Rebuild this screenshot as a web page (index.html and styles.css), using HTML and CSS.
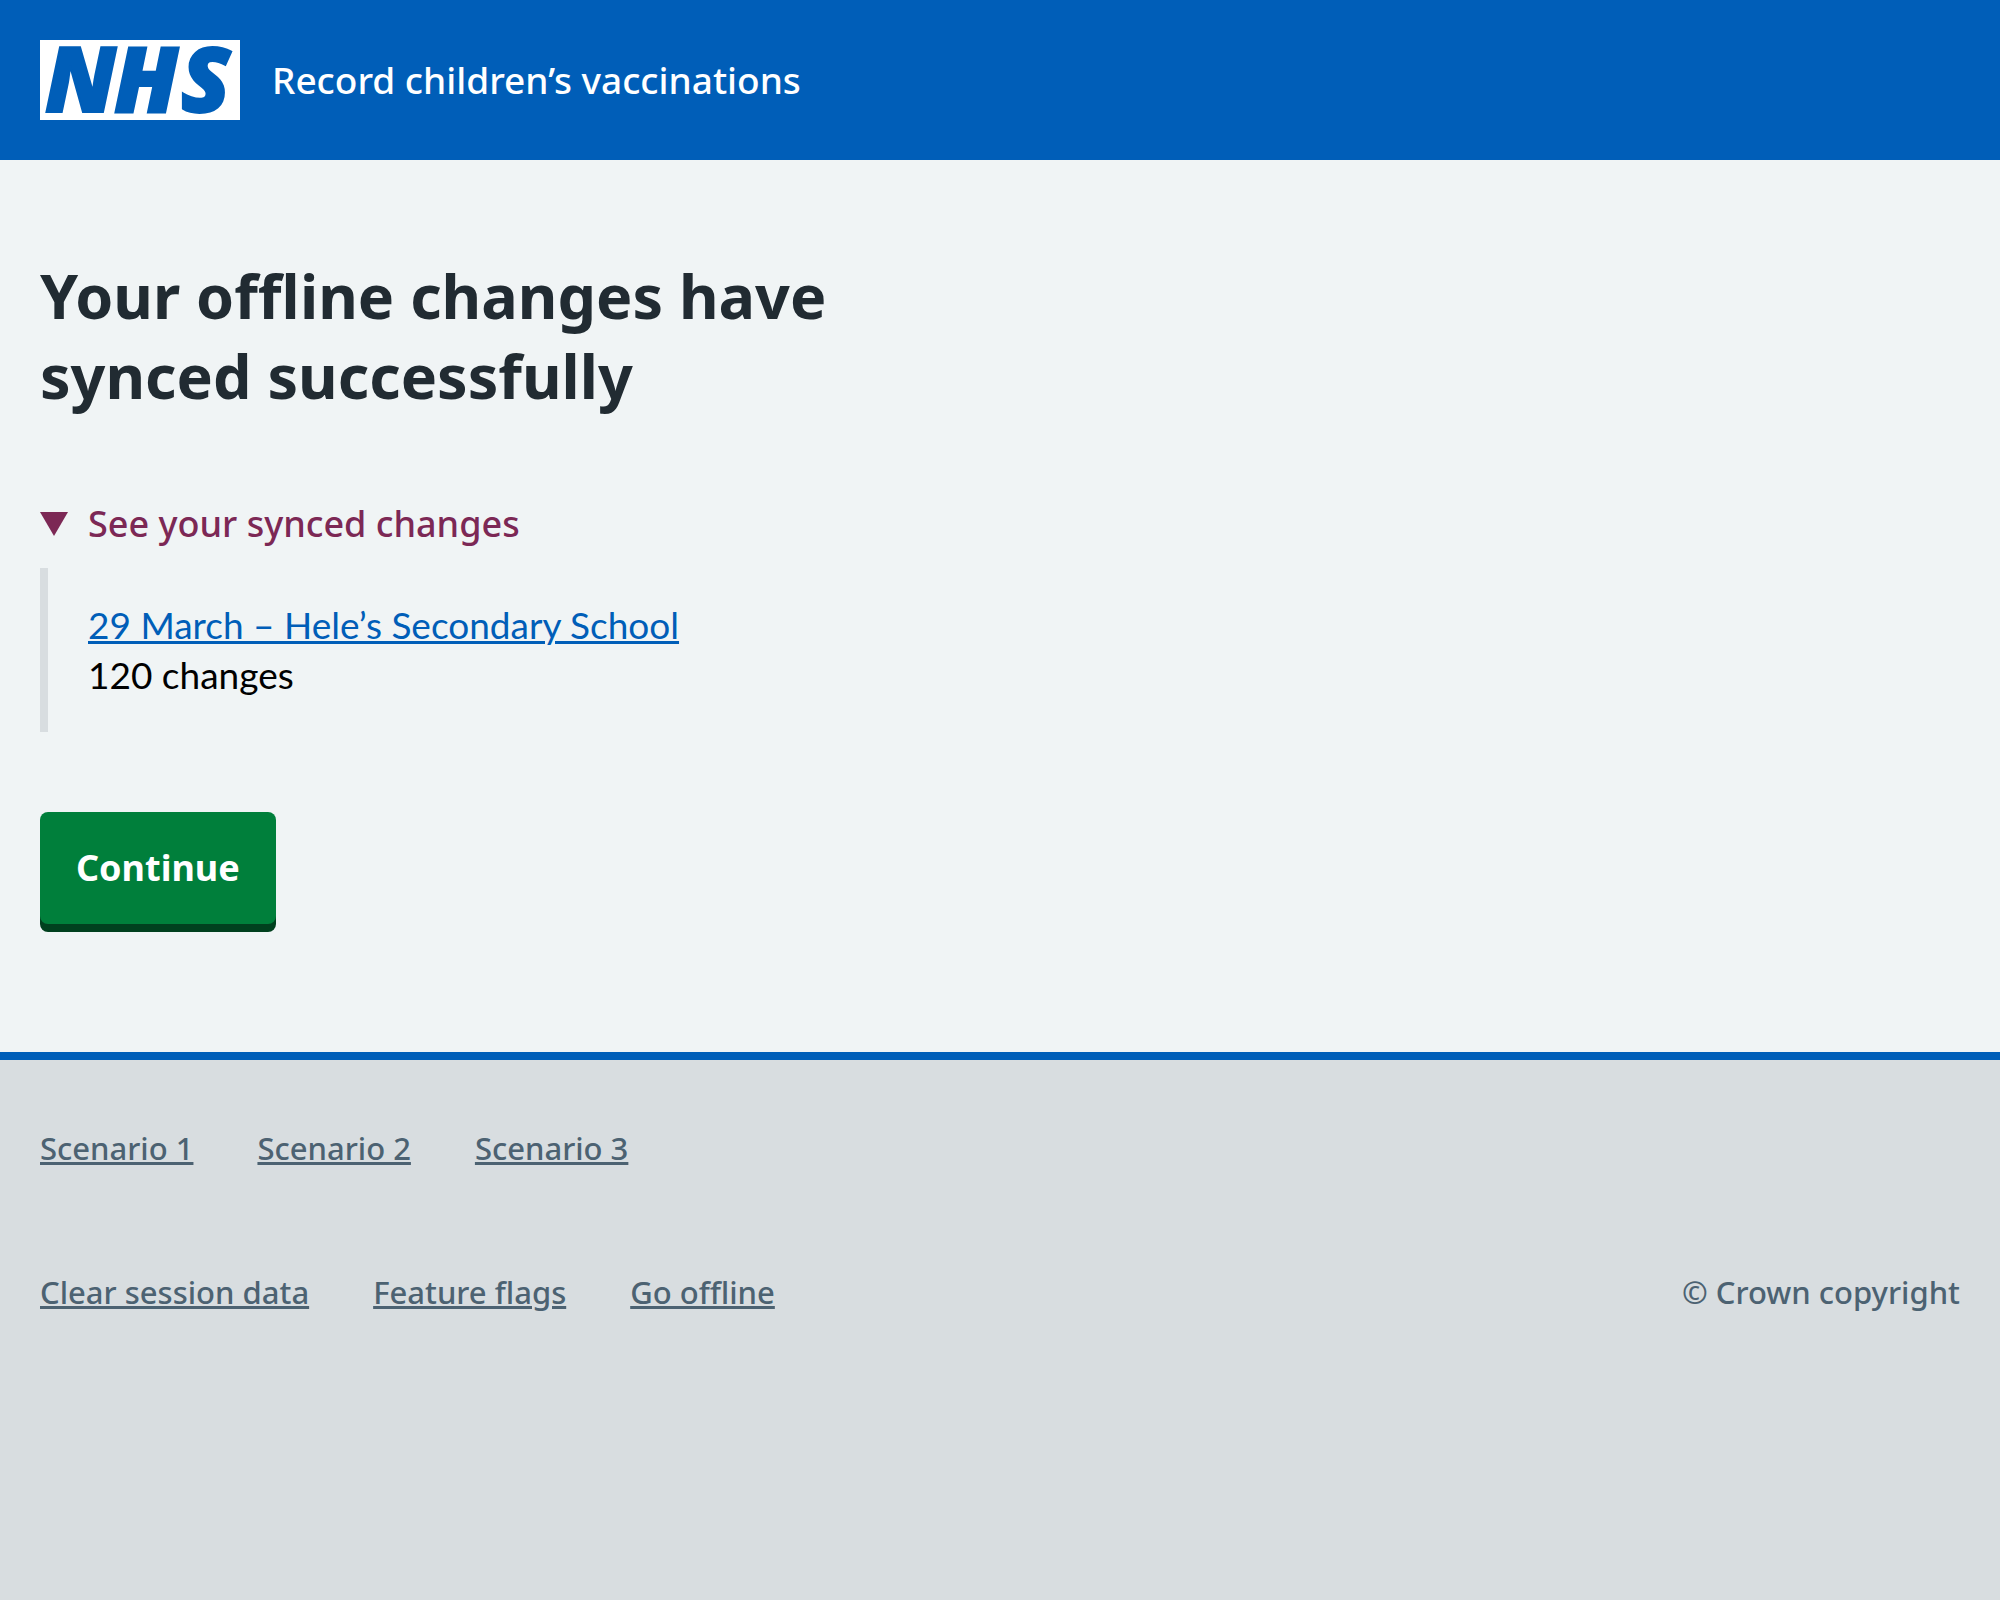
FILE: index.html
```html
<!DOCTYPE html>
<html lang="en">
<head>
  <meta charset="utf-8">
  <meta name="viewport" content="width=device-width, initial-scale=1">
  <title>Your offline changes have synced successfully</title>
  <link rel="stylesheet" href="styles.css">
</head>
<body>
  <header class="header">
    <a class="header__link" href="#">
      <svg class="header__logo" viewBox="0 0 200 80" width="200" height="80" role="img" aria-label="NHS">
        <rect width="200" height="80" fill="#fff"/>
        <text class="header__logo-text" x="5 74 141" y="72">NHS</text>
      </svg>
      <span class="header__name">Record children’s vaccinations</span>
    </a>
  </header>

  <main class="main">
    <h1 class="heading">Your offline changes have synced successfully</h1>
    <details class="details" open>
      <summary class="details__summary">
        <svg class="details__arrow" viewBox="0 0 28 24" width="28" height="24" aria-hidden="true"><path d="M0 0h28L14 24z" fill="currentColor"/></svg>
        <span>See your synced changes</span>
      </summary>
      <div class="details__body">
        <a class="link" href="#">29 March – Hele’s Secondary School</a>
        <div>120 changes</div>
      </div>
    </details>
    <button class="button" type="button">Continue</button>
  </main>

  <footer class="footer">
    <ul class="footer__list">
      <li><a class="footer__link" href="#">Scenario 1</a></li>
      <li><a class="footer__link" href="#">Scenario 2</a></li>
      <li><a class="footer__link" href="#">Scenario 3</a></li>
    </ul>
    <div class="footer__row">
      <ul class="footer__list">
        <li><a class="footer__link" href="#">Clear session data</a></li>
        <li><a class="footer__link" href="#">Feature flags</a></li>
        <li><a class="footer__link" href="#">Go offline</a></li>
      </ul>
      <p class="footer__copyright">© Crown copyright</p>
    </div>
  </footer>
</body>
</html>
```
FILE: styles.css
```css
* {
  box-sizing: border-box;
}

body {
  margin: 0;
  min-height: 100vh;
  display: flex;
  flex-direction: column;
  background: #d8dde0;
  color: #212b32;
  font-family: "Noto Sans", "Open Sans", sans-serif;
  font-size: 37px;
  font-weight: 500;
  line-height: 56px;
}

.header {
  display: flex;
  padding: 40px;
  background: #005eb8;
}

.header__link {
  display: flex;
  align-items: center;
  gap: 32px;
  color: #fff;
  text-decoration: none;
}

.header__logo {
  display: block;
  flex: none;
  overflow: visible;
}

.header__logo-text {
  fill: #005eb8;
  stroke: #005eb8;
  stroke-width: 2px;
  font-family: "Open Sans", sans-serif;
  font-size: 90px;
  font-style: italic;
  font-weight: 800;
}

.main {
  padding: 96px 40px 128px;
  background: #f0f4f5;
}

.heading {
  max-width: 840px;
  margin: 0 0 80px;
  font-size: 61px;
  font-weight: 700;
  line-height: 80px;
}

.details {
  margin-bottom: 80px;
}

.details__summary {
  display: flex;
  align-items: center;
  gap: 20px;
  margin-bottom: 16px;
  color: #7c2855;
  font-size: 36px;
  list-style: none;
  cursor: pointer;
}

.details__body {
  padding: 32px 40px;
  border-left: 8px solid #d8dde0;
  color: #000;
  font-family: Lato, sans-serif;
  font-weight: 400;
  line-height: 50px;
}

.link {
  color: #005eb8;
  text-decoration-thickness: 3px;
}

.button {
  display: block;
  padding: 28px 36px;
  border: 0;
  border-radius: 8px;
  background: #007f3b;
  box-shadow: 0 8px 0 #00401e;
  color: #fff;
  font: inherit;
  font-size: 36px;
  font-weight: 700;
  cursor: pointer;
}

.footer {
  display: flex;
  flex-direction: column;
  gap: 96px;
  padding: 64px 40px;
  border-top: 8px solid #005eb8;
  color: #4c6272;
  font-size: 31px;
  line-height: 48px;
}

.footer__row {
  display: flex;
  flex-wrap: wrap;
  justify-content: space-between;
}

.footer__list {
  display: flex;
  flex-wrap: wrap;
  column-gap: 64px;
  margin: 0;
  padding: 0;
  list-style: none;
}

.footer__link {
  color: inherit;
  text-decoration-thickness: 3px;
}

.footer__copyright {
  margin: 0;
}
```
